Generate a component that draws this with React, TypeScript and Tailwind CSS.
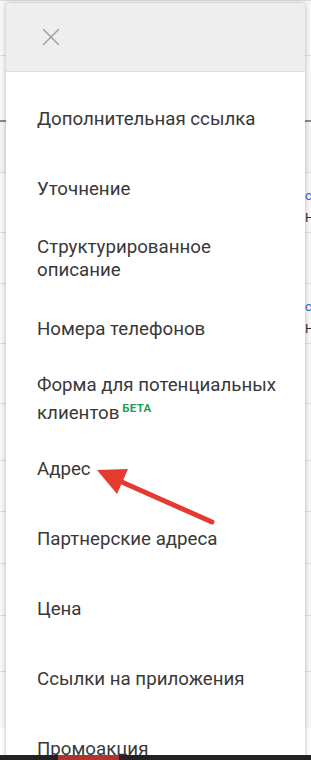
import { X } from 'lucide-react'

const ITEMS: { label: string[]; beta?: boolean }[] = [
  { label: ['Дополнительная ссылка'] },
  { label: ['Уточнение'] },
  { label: ['Структурированное', 'описание'] },
  { label: ['Номера телефонов'] },
  { label: ['Форма для потенциальных', 'клиентов'], beta: true },
  { label: ['Адрес'] },
  { label: ['Партнерские адреса'] },
  { label: ['Цена'] },
  { label: ['Ссылки на приложения'] },
  { label: ['Промоакция'] },
]

// rows of the page that sits behind the drawer: height + optional link text
const BG_ROWS: { h: number; dark?: boolean; link?: boolean }[] = [
  { h: 55 },
  { h: 65 },
  { h: 52, dark: true },
  { h: 60, link: true },
  { h: 51 },
  { h: 60, link: true },
  { h: 60 },
  { h: 57 },
  { h: 51 },
  { h: 52 },
  { h: 52 },
  { h: 56 },
  { h: 57 },
]

function Arrow() {
  return (
    <svg className="absolute left-0 top-0 pointer-events-none" width="311" height="760" viewBox="0 0 311 760">
      <line x1="212" y1="522" x2="115" y2="479" stroke="#e53a2f" strokeWidth="5" strokeLinecap="round" />
      <polygon points="97,470 128,469 117,494" fill="#e53a2f" />
    </svg>
  )
}

export default function App() {
  return (
    <div className="relative w-[311px] h-[760px] overflow-hidden bg-white font-['Roboto',sans-serif]">
      {/* page behind the drawer */}
      <div className="flex flex-col">
        {BG_ROWS.map((row, i) => (
          <div
            key={i}
            className={
              row.dark
                ? 'border-t-2 border-[#8a8a8a] bg-[#f3f3f3]'
                : 'border-t border-[#dcdcdc] bg-[#f7f7f7]'
            }
            style={{ height: row.h }}
          >
            {row.link && (
              <div className="pl-[305px] pt-[12px] text-[13px] leading-[22px] whitespace-nowrap">
                <div className="text-[#3367d6]">с</div>
                <div className="text-[#333]">Н</div>
              </div>
            )}
          </div>
        ))}
      </div>

      {/* drawer */}
      <div className="absolute left-[6px] top-[3px] w-[299px] h-[780px] rounded-t-[4px] bg-white shadow-[0_0_5px_rgba(0,0,0,0.28)] overflow-hidden">
        <div className="h-[69px] bg-[#eeeeee] border-b border-[#dedede] flex items-center pl-[30px]">
          <X size={30} strokeWidth={1.1} className="text-[#9e9e9e]" />
        </div>
        <div className="pt-[12px] flex flex-col">
          {ITEMS.map((item) => (
            <div key={item.label[0]} className="h-[70px] flex items-center pl-[31px]">
              <div className="text-[18.7px] leading-[23px] text-[#383838] whitespace-nowrap">
                {item.label.map((line, j) => (
                  <div key={j}>
                    {line}
                    {item.beta && j === item.label.length - 1 && (
                      <span className="ml-[3px] align-[7px] text-[11.5px] tracking-[0.3px] font-bold text-[#1e9e57]">БЕТА</span>
                    )}
                  </div>
                ))}
              </div>
            </div>
          ))}
        </div>
      </div>

      <Arrow />

      {/* bottom bar */}
      <div className="absolute left-0 right-0 bottom-0 h-[5px] bg-[#222] flex">
        <div className="ml-[58px] w-[61px] bg-[#b3322d]" />
      </div>
    </div>
  )
}
